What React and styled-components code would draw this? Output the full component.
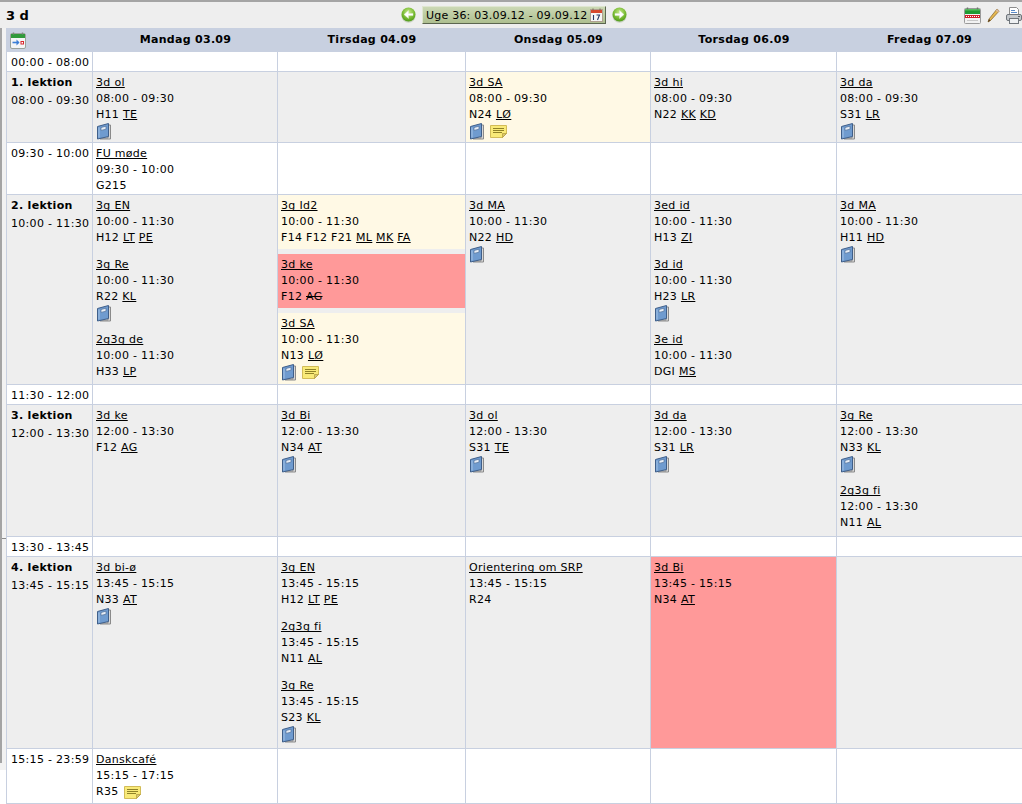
import React from "react";
import styled, { createGlobalStyle } from "styled-components";

const colors = {
  line: "#c8d0e0",
  gray: "#eeeeee",
  yellow: "#fff9e5",
  red: "#ff9999",
};

const GlobalStyle = createGlobalStyle`
  html, body {
    margin: 0;
    padding: 0;
    background: #ffffff;
  }
  body {
    font-family: "DejaVu Sans", Verdana, sans-serif;
    font-size: 11px;
    letter-spacing: 0.3px;
    color: #000000;
  }
`;

const Page = styled.div`
  width: 1022px;
  height: 804px;
  overflow: hidden;
  border-top: 2px solid #a4a4a4;
  box-sizing: border-box;
`;

const TopBar = styled.div`
  height: 26px;
  padding-left: 6px;
  display: grid;
  grid-template-columns: 1fr auto 1fr;
  align-items: center;
  background: ${colors.gray};
`;

const Title = styled.div`
  font-size: 13px;
  font-weight: bold;
  letter-spacing: 0;
`;

const WeekNav = styled.div`
  display: flex;
  align-items: center;
  gap: 6px;
`;

const WeekButton = styled.div`
  height: 18px;
  width: 184px;
  box-sizing: border-box;
  padding: 0 2px 0 3px;
  display: flex;
  align-items: center;
  justify-content: space-between;
  white-space: nowrap;
  letter-spacing: 0.22px;
  background: linear-gradient(#cbd8b4, #aebf90);
  border-top: 1px solid #dfe6d0;
  border-left: 1px solid #dfe6d0;
  border-right: 1px solid #5c6650;
  border-bottom: 1px solid #5c6650;
`;

const Tools = styled.div`
  display: flex;
  justify-content: flex-end;
  align-items: center;
  gap: 6px;
`;

const Body = styled.div`
  display: flex;
`;

const Rail = styled.div`
  width: 6px;
  height: 742px;
  flex-shrink: 0;
  position: relative;
  background: #f2f2f2;

  &::before {
    content: "";
    position: absolute;
    left: 0;
    top: 0;
    width: 2px;
    height: 735px;
    background: #a4a4a4;
  }

  &::after {
    content: "";
    position: absolute;
    left: 2px;
    top: 510px;
    width: 4px;
    height: 1px;
    background: #8c8c8c;
  }
`;

const Schedule = styled.div`
  width: 1016px;
  flex-shrink: 0;
  box-sizing: border-box;
  border-left: 1px solid ${colors.line};
`;

const columns = "86px 185px 188px 185px 186px 185px";

const HeadRow = styled.div`
  display: grid;
  grid-template-columns: ${columns};
  height: 24px;
  background: ${colors.line};
`;

const HeadCell = styled.div`
  display: flex;
  align-items: center;
  justify-content: center;
  font-weight: bold;
  padding-bottom: 2px;
  box-sizing: border-box;
  white-space: nowrap;
`;

const HeadIconCell = styled.div`
  display: flex;
  align-items: center;
  padding-left: 3px;
`;

const Row = styled.div`
  display: grid;
  grid-template-columns: ${columns};
  height: ${(p) => p.$h}px;
  box-sizing: content-box;
  border-bottom: 1px solid ${colors.line};
  background: ${(p) => (p.$shaded ? colors.gray : "#ffffff")};
`;

const TimeCell = styled.div`
  box-sizing: border-box;
  padding: 3px 0 0 4px;
  border-right: 1px solid ${colors.line};
  line-height: 16px;
  white-space: nowrap;
`;

const Lesson = styled.div`
  font-weight: bold;
  margin-bottom: 2px;
`;

const DayCell = styled.div`
  box-sizing: border-box;
  display: flex;
  flex-direction: column;
  min-height: 0;
  border-right: 1px solid ${colors.line};

  &:last-child {
    border-right: 0;
  }
`;

const toneColor = { yellow: colors.yellow, red: colors.red };

const Event = styled.div`
  padding: 3px 3px 3px;
  margin-bottom: 5px;
  line-height: 16px;
  white-space: nowrap;
  background: ${(p) => toneColor[p.$tone] || "transparent"};

  &:last-child {
    margin-bottom: 0;
    padding-bottom: 0;
    flex: 1;
  }
`;

const Line = styled.div`
  height: 16px;
  display: flex;
  align-items: center;
  gap: 5px;
`;

const Link = styled.span`
  text-decoration: underline;
  text-decoration-skip-ink: none;
`;

const Gone = styled.span`
  text-decoration: line-through;
`;

const IconRow = styled.div`
  height: 16px;
  display: flex;
  align-items: center;
  gap: 5px;
`;

const Svg = styled.svg`
  display: block;
  flex-shrink: 0;
`;

function BookIcon() {
  return (
    <Svg width="16" height="17" viewBox="0 0 16 17">
      <path d="M12 2h2.5v14H4v-1h8z" fill="#d8d8d8" stroke="#8a8a8a" strokeWidth="1" />
      <path d="M1.5 3.5 12.5 0.5v13l-11 2.5z" fill="#6f9bcf" stroke="#3f5f8a" strokeWidth="1" />
      <path d="M3 4.5v10" stroke="#a5c3e6" strokeWidth="1" />
      <path d="M5 4.5 10 3.2v3l-5 1.2z" fill="#e8eef6" stroke="#4f6f98" strokeWidth="0.7" />
    </Svg>
  );
}

function NoteIcon() {
  return (
    <Svg width="17" height="13" viewBox="0 0 17 13">
      <path d="M0.5 0.5h16v8l-4 4h-12z" fill="#f9ea78" stroke="#d2bc58" />
      <path d="M12.5 12.5v-4h4z" fill="#d8c870" stroke="#b09a40" strokeWidth="0.7" />
      <path d="M3 3.5h11M3 5.5h11M3 7.5h9" stroke="#8f8228" strokeWidth="1" />
    </Svg>
  );
}

function PlanIcon() {
  return (
    <Svg width="16" height="17" viewBox="0 0 16 17">
      <rect x="0.5" y="1.5" width="15" height="15" rx="1.5" fill="#f4f6f6" stroke="#9aa39a" />
      <rect x="1" y="2" width="14" height="4" fill="#2f9a3a" />
      <path d="M3.5 0.5v2M12.5 0.5v2" stroke="#7c8a7c" strokeWidth="1.4" />
      <path d="M2.5 10.5h6" stroke="#3b7fd6" strokeWidth="1.6" />
      <path d="M6.5 7.5 9.5 10.5 6.5 13.5z" fill="#3b7fd6" />
      <rect x="10.5" y="9" width="3.5" height="3.5" fill="#d8262c" />
      <rect x="11.5" y="10" width="1.5" height="1.5" fill="#ffffff" />
    </Svg>
  );
}

function ArrowButton({ id, flip }) {
  return (
    <Svg width="15" height="16" viewBox="0 0 15 16">
      <defs>
        <radialGradient id={id} cx="50%" cy="35%" r="65%">
          <stop offset="0%" stopColor="#c8ec8a" />
          <stop offset="70%" stopColor="#71b52c" />
          <stop offset="100%" stopColor="#4f9a1c" />
        </radialGradient>
      </defs>
      <ellipse cx="7.5" cy="9" rx="7" ry="6.8" fill="#c9d2c0" />
      <circle cx="7.5" cy="7.5" r="7" fill={`url(#${id})`} />
      <path
        d={flip ? "M3 6.5h4.5V3.5L12 7.5l-4.5 4V8.5H3z" : "M12 6.5H7.5V3.5L3 7.5l4.5 4V8.5H12z"}
        fill="#ffffff"
        stroke="#dfe8d8"
        strokeWidth="0.4"
      />
    </Svg>
  );
}

function SmallCalendar() {
  return (
    <Svg width="13" height="14" viewBox="0 0 13 14">
      <rect x="0.5" y="1.5" width="12" height="12" fill="#f6f6f6" stroke="#b0a090" />
      <rect x="1" y="2" width="11" height="3" fill="#d8482c" />
      <path d="M3 0.5v2M10 0.5v2" stroke="#7a6a5a" />
      <path d="M3.5 7v5M6.5 7h3l-2 5" fill="none" stroke="#2a3a66" strokeWidth="1.1" />
    </Svg>
  );
}

function GreenCalendar() {
  return (
    <Svg width="17" height="17" viewBox="0 0 17 17">
      <rect x="0.5" y="1.5" width="16" height="15" rx="1" fill="#f2f2f2" stroke="#9a9a9a" />
      <rect x="1" y="2" width="15" height="5" fill="#1f9a32" />
      <rect x="1" y="2" width="15" height="1.5" fill="#57c05f" />
      <path d="M3.5 0.5v2M13.5 0.5v2" stroke="#6c7a6c" strokeWidth="1.4" />
      <rect x="1" y="8" width="15" height="3" fill="#cf1f2a" />
      <path d="M2 9.5h14" stroke="#ffffff" strokeDasharray="1 1" />
      <path d="M3 13.5h11" stroke="#c8c8c8" />
    </Svg>
  );
}

function Pencil() {
  return (
    <Svg width="13" height="15" viewBox="0 0 13 15">
      <path d="M10 1 12.2 3 3.6 12.4 1 14 2 11z" fill="#e6b850" stroke="#7c5f2a" strokeWidth="0.7" />
      <path d="M10 1 12.2 3 11 4.4 8.8 2.4z" fill="#d8b8a0" />
      <path d="M1 14 2 11 3.6 12.4z" fill="#5a3e1e" />
    </Svg>
  );
}

function Printer() {
  return (
    <Svg width="16" height="17" viewBox="0 0 16 17">
      <path d="M3.5 0.5h7l2 2v6h-9z" fill="#ffffff" stroke="#8c8c8c" />
      <path d="M5 3.5h4M5 5.5h6" stroke="#5a8ac8" />
      <rect x="0.5" y="7.5" width="15" height="6" rx="1.5" fill="#c4c8cc" stroke="#70767c" />
      <rect x="3.5" y="11.5" width="9" height="5" fill="#eef0f2" stroke="#70767c" />
      <rect x="12" y="9" width="2" height="1" fill="#5a6066" />
    </Svg>
  );
}

const ev = (title, time, room, people = [], opts = {}) => ({ title, time, room, people, ...opts });

const rows = [
  { h: 19, label: "00:00 - 08:00", days: [[], [], [], [], []] },
  {
    h: 70,
    shaded: true,
    lesson: "1. lektion",
    label: "08:00 - 09:30",
    days: [
      [ev("3d ol", "08:00 - 09:30", "H11", ["TE"], { book: true })],
      [],
      [ev("3d SA", "08:00 - 09:30", "N24", ["LØ"], { book: true, note: true, tone: "yellow" })],
      [ev("3d hi", "08:00 - 09:30", "N22", ["KK", "KD"])],
      [ev("3d da", "08:00 - 09:30", "S31", ["LR"], { book: true })],
    ],
  },
  {
    h: 51,
    label: "09:30 - 10:00",
    days: [[ev("FU møde", "09:30 - 10:00", "G215")], [], [], [], []],
  },
  {
    h: 189,
    shaded: true,
    lesson: "2. lektion",
    label: "10:00 - 11:30",
    days: [
      [
        ev("3g EN", "10:00 - 11:30", "H12", ["LT", "PE"]),
        ev("3g Re", "10:00 - 11:30", "R22", ["KL"], { book: true }),
        ev("2g3g de", "10:00 - 11:30", "H33", ["LP"]),
      ],
      [
        ev("3g Id2", "10:00 - 11:30", "F14 F12 F21", ["ML", "MK", "FA"], { tone: "yellow" }),
        ev("3d ke", "10:00 - 11:30", "F12", [], { tone: "red", gone: "AG" }),
        ev("3d SA", "10:00 - 11:30", "N13", ["LØ"], { book: true, note: true, tone: "yellow" }),
      ],
      [ev("3d MA", "10:00 - 11:30", "N22", ["HD"], { book: true })],
      [
        ev("3ed id", "10:00 - 11:30", "H13", ["ZI"]),
        ev("3d id", "10:00 - 11:30", "H23", ["LR"], { book: true }),
        ev("3e id", "10:00 - 11:30", "DGI", ["MS"]),
      ],
      [ev("3d MA", "10:00 - 11:30", "H11", ["HD"], { book: true })],
    ],
  },
  { h: 19, label: "11:30 - 12:00", days: [[], [], [], [], []] },
  {
    h: 131,
    shaded: true,
    lesson: "3. lektion",
    label: "12:00 - 13:30",
    days: [
      [ev("3d ke", "12:00 - 13:30", "F12", ["AG"])],
      [ev("3d Bi", "12:00 - 13:30", "N34", ["AT"], { book: true })],
      [ev("3d ol", "12:00 - 13:30", "S31", ["TE"], { book: true })],
      [ev("3d da", "12:00 - 13:30", "S31", ["LR"], { book: true })],
      [
        ev("3g Re", "12:00 - 13:30", "N33", ["KL"], { book: true }),
        ev("2g3g fi", "12:00 - 13:30", "N11", ["AL"]),
      ],
    ],
  },
  { h: 19, label: "13:30 - 13:45", days: [[], [], [], [], []] },
  {
    h: 191,
    shaded: true,
    lesson: "4. lektion",
    label: "13:45 - 15:15",
    days: [
      [ev("3d bi-ø", "13:45 - 15:15", "N33", ["AT"], { book: true })],
      [
        ev("3g EN", "13:45 - 15:15", "H12", ["LT", "PE"]),
        ev("2g3g fi", "13:45 - 15:15", "N11", ["AL"]),
        ev("3g Re", "13:45 - 15:15", "S23", ["KL"], { book: true }),
      ],
      [ev("Orientering om SRP", "13:45 - 15:15", "R24")],
      [ev("3d Bi", "13:45 - 15:15", "N34", ["AT"], { tone: "red" })],
      [],
    ],
  },
  {
    h: 54,
    label: "15:15 - 23:59",
    days: [[ev("Danskcafé", "15:15 - 17:15", "R35", [], { inlineNote: true })], [], [], [], []],
  },
];

const dayNames = ["Mandag 03.09", "Tirsdag 04.09", "Onsdag 05.09", "Torsdag 06.09", "Fredag 07.09"];

function EventBlock({ item }) {
  return (
    <Event $tone={item.tone}>
      <div>
        <Link>{item.title}</Link>
      </div>
      <div>{item.time}</div>
      <Line>
        <span>
          {item.room}
          {item.people.map((p) => (
            <React.Fragment key={p}>
              {" "}
              <Link>{p}</Link>
            </React.Fragment>
          ))}
          {item.gone && (
            <>
              {" "}
              <Gone>{item.gone}</Gone>
            </>
          )}
        </span>
        {item.inlineNote && <NoteIcon />}
      </Line>
      {(item.book || item.note) && (
        <IconRow>
          {item.book && <BookIcon />}
          {item.note && <NoteIcon />}
        </IconRow>
      )}
    </Event>
  );
}

export default function App() {
  return (
    <Page>
      <GlobalStyle />
      <TopBar>
        <Title>3 d</Title>
        <WeekNav>
          <ArrowButton id="prevWeek" />
          <WeekButton>
            Uge 36: 03.09.12 - 09.09.12
            <SmallCalendar />
          </WeekButton>
          <ArrowButton id="nextWeek" flip />
        </WeekNav>
        <Tools>
          <GreenCalendar />
          <Pencil />
          <Printer />
        </Tools>
      </TopBar>
      <Body>
        <Rail />
        <Schedule>
          <HeadRow>
            <HeadIconCell>
              <PlanIcon />
            </HeadIconCell>
            {dayNames.map((d) => (
              <HeadCell key={d}>{d}</HeadCell>
            ))}
          </HeadRow>
          {rows.map((row) => (
            <Row key={row.label} $h={row.h} $shaded={row.shaded}>
              <TimeCell>
                {row.lesson && <Lesson>{row.lesson}</Lesson>}
                {row.label}
              </TimeCell>
              {row.days.map((events, i) => (
                <DayCell key={i}>
                  {events.map((item, j) => (
                    <EventBlock key={j} item={item} />
                  ))}
                </DayCell>
              ))}
            </Row>
          ))}
        </Schedule>
      </Body>
    </Page>
  );
}
